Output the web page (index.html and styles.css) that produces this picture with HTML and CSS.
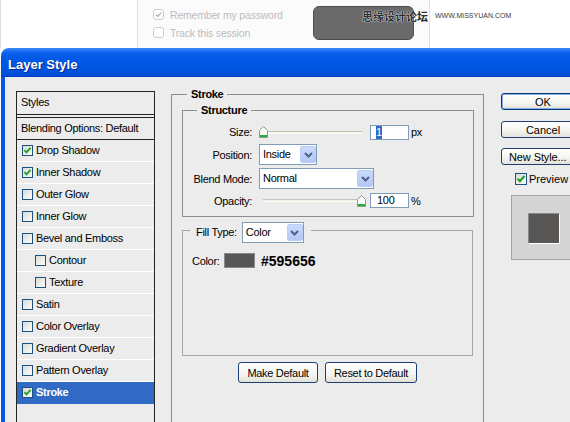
FILE: index.html
```html
<!DOCTYPE html>
<html lang="en">
<head>
<meta charset="utf-8">
<title>Layer Style</title>
<link rel="stylesheet" href="styles.css">
</head>
<body>
<div class="top">
  <div class="col col-a"></div>
  <div class="col col-b">
    <div class="login-opts">
      <div class="opt"><span class="rbox"><svg width="9" height="9" viewBox="0 0 9 9"><path d="M1.8 4.6 L3.6 6.4 L7.2 2.6" fill="none" stroke="#a9a9a9" stroke-width="1.3"/></svg></span>Remember my password</div>
      <div class="opt"><span class="rbox"></span>Track this session</div>
    </div>
    <div class="darkbtn"></div>
  </div>
  <div class="col col-c"></div>
  <div class="watermark"><span class="wm-cn">思缘设计论坛</span><span class="wm-en">WWW.MISSYUAN.COM</span></div>
</div>

<div class="dialog">
  <div class="titlebar">Layer Style</div>
  <div class="dbody">
    <div class="list">
      <div class="lh">Styles</div>
      <div class="blend">Blending Options: Default</div>
      <div class="row"><span class="cb"><svg width="9" height="9" viewBox="0 0 9 9"><path d="M1.5 4.2 L3.5 6.4 L7.6 1.8" fill="none" stroke="#21a121" stroke-width="1.9"/></svg></span>Drop Shadow</div>
      <div class="row"><span class="cb"><svg width="9" height="9" viewBox="0 0 9 9"><path d="M1.5 4.2 L3.5 6.4 L7.6 1.8" fill="none" stroke="#21a121" stroke-width="1.9"/></svg></span>Inner Shadow</div>
      <div class="row"><span class="cb"></span>Outer Glow</div>
      <div class="row"><span class="cb"></span>Inner Glow</div>
      <div class="row"><span class="cb"></span>Bevel and Emboss</div>
      <div class="row sub"><span class="cb"></span>Contour</div>
      <div class="row sub"><span class="cb"></span>Texture</div>
      <div class="row"><span class="cb"></span>Satin</div>
      <div class="row"><span class="cb"></span>Color Overlay</div>
      <div class="row"><span class="cb"></span>Gradient Overlay</div>
      <div class="row"><span class="cb"></span>Pattern Overlay</div>
      <div class="row sel"><span class="cb"><svg width="9" height="9" viewBox="0 0 9 9"><path d="M1.5 4.2 L3.5 6.4 L7.6 1.8" fill="none" stroke="#21a121" stroke-width="1.9"/></svg></span>Stroke</div>
    </div>

    <div class="main">
      <fieldset class="grp stroke">
        <legend>Stroke</legend>
        <fieldset class="grp structure">
          <legend>Structure</legend>
          <div class="form">
            <div class="lbl">Size:</div>
            <div class="ctl">
              <div class="slider">
                <svg class="thumb" width="9" height="12" viewBox="0 0 9 12"><path d="M0.5 4.5 L4.5 0.5 L8.5 4.5 V11.5 H0.5 Z" fill="#fbfbf8" stroke="#8c9a8c"/><path d="M1 9.5 H8 M1 10.5 H8" stroke="#27a93f"/></svg>
                <div class="track"></div>
              </div>
              <div class="num"><span class="hl">1</span></div>
              <span class="unit">px</span>
            </div>

            <div class="lbl">Position:</div>
            <div class="ctl">
              <div class="sel-box w58"><span class="val">Inside</span><span class="arrow"><svg width="9" height="6" viewBox="0 0 9 6"><path d="M1 1 L4.5 4.5 L8 1" fill="none" stroke="#4d6185" stroke-width="2"/></svg></span></div>
            </div>

            <div class="lbl">Blend Mode:</div>
            <div class="ctl">
              <div class="sel-box w115"><span class="val">Normal</span><span class="arrow"><svg width="9" height="6" viewBox="0 0 9 6"><path d="M1 1 L4.5 4.5 L8 1" fill="none" stroke="#4d6185" stroke-width="2"/></svg></span></div>
            </div>

            <div class="lbl">Opacity:</div>
            <div class="ctl">
              <div class="slider">
                <div class="track left"></div>
                <svg class="thumb" width="9" height="12" viewBox="0 0 9 12"><path d="M0.5 4.5 L4.5 0.5 L8.5 4.5 V11.5 H0.5 Z" fill="#fbfbf8" stroke="#8c9a8c"/><path d="M1 9.5 H8 M1 10.5 H8" stroke="#27a93f"/></svg>
              </div>
              <div class="num pad6">100</div>
              <span class="unit">%</span>
            </div>
          </div>
        </fieldset>

        <fieldset class="grp fill">
          <legend>
            <span class="fill-lbl">Fill Type:</span>
            <span class="sel-box w62"><span class="val">Color</span><span class="arrow"><svg width="9" height="6" viewBox="0 0 9 6"><path d="M1 1 L4.5 4.5 L8 1" fill="none" stroke="#4d6185" stroke-width="2"/></svg></span></span>
          </legend>
          <div class="fill-body">
            <div class="color-row">
              <span class="clbl">Color:</span>
              <span class="swatch"></span>
              <span class="hex">#595656</span>
            </div>
          </div>
        </fieldset>

        <div class="btnrow">
          <div class="xbtn w80">Make Default</div>
          <div class="xbtn w92">Reset to Default</div>
        </div>
      </fieldset>
    </div>

    <div class="side">
      <div class="xbtn sbtn default">OK</div>
      <div class="xbtn sbtn m11">Cancel</div>
      <div class="xbtn sbtn m10 lefttext">New Style...</div>
      <div class="prev"><span class="cb big"><svg width="10" height="10" viewBox="0 0 9 9"><path d="M1.5 4.2 L3.5 6.4 L7.6 1.8" fill="none" stroke="#21a121" stroke-width="1.9"/></svg></span>Preview</div>
      <div class="pbox"><div class="psq"></div></div>
    </div>
  </div>
</div>
</body>
</html>
```

FILE: styles.css
```css
* { box-sizing: border-box; }
html, body { margin: 0; padding: 0; }
body {
  width: 570px;
  height: 422px;
  overflow: hidden;
  background: #fff;
  font-family: "Liberation Sans", Arial, Helvetica, sans-serif;
  font-size: 11px;
  color: #000;
}

/* ---------- top web page strip ---------- */
.top { position: relative; display: flex; height: 48px; }
.col-a { width: 138px; border-left: 1px solid #dedede; border-right: 1px solid #dedede; }
.col-b {
  width: 292px;
  border-right: 1px solid #dedede;
  background: #fbfbfb;
  display: flex;
  justify-content: space-between;
  align-items: flex-start;
  padding: 6px 15px 0 15px;
}
.col-c { flex: 1; }
.login-opts { display: flex; flex-direction: column; gap: 7px; padding-top: 3px; }
.opt {
  display: flex; align-items: center; gap: 6px;
  height: 11px; color: #bcbcbc; font-size: 10.5px; letter-spacing: -0.2px; white-space: nowrap;
}
.rbox {
  width: 11px; height: 11px; border: 1px solid #cdcdcd; border-radius: 3px; background: #fff;
  display: flex; align-items: center; justify-content: center;
}
.darkbtn { width: 101px; height: 34px; background: #6a6a6a; border: 1px solid #4e4e4e; border-radius: 6px; }
.watermark { position: absolute; left: 362px; top: 9px; display: flex; align-items: center; gap: 7px; }
.wm-cn {
  font-family: "Noto Sans CJK SC", sans-serif; font-size: 11px; line-height: 14px;
  color: #2c2c2c; font-weight: bold; text-shadow: 0 0 1px #fff, 0 0 1px #fff;
}
.wm-en { font-size: 7px; color: #3a3a3a; line-height: 8px; }

/* ---------- dialog ---------- */
.dialog { margin-left: 1px; width: 620px; }
.titlebar {
  height: 29px;
  border-radius: 8px 8px 0 0;
  background: linear-gradient(to bottom, #3b8cf7 0px, #2677f3 2px, #0a5eea 5px, #0058e6 12px, #0055e2 20px, #0050da 26px, #0040c4 29px);
  color: #fff; font-weight: bold; font-size: 13px; line-height: 24px;
  padding: 5px 0 0 7px;
  text-shadow: 1px 1px 0 #0b2a8c;
}
.dbody {
  display: flex; align-items: flex-start;
  height: 345px;
  padding: 10px 0 0 11px;
  background: #ececec;
  border-left: 4px solid #0c55e3;
}
.dbody > * { flex-shrink: 0; }

/* styles list */
.list { width: 139px; height: 340px; margin-top: 4px; border: 1px solid #242424; letter-spacing: -0.3px; }
.lh { height: 23px; line-height: 21px; padding-left: 4px; border-bottom: 1px solid #242424; }
.blend {
  height: 23px; margin-top: 2px; line-height: 20px; padding-left: 4px;
  border-top: 1px solid #242424; border-bottom: 1px solid #242424;
}
.row { height: 22px; display: flex; align-items: center; gap: 3px; padding-left: 5px; padding-bottom: 1px; border-bottom: 1px solid #fff; }
.row.sub { padding-left: 18px; }
.row.sel { background: #316ac5; color: #fff; font-weight: bold; border-bottom-color: #316ac5; }
.cb {
  width: 11px; height: 11px; flex-shrink: 0;
  border: 1px solid #1c5180;
  background: linear-gradient(135deg, #dcdcd6, #fbfbf9);
  display: flex; align-items: center; justify-content: center;
}
.cb.big { width: 12px; height: 12px; }

/* main panel */
.main { margin-left: 16px; width: 313px; }
.grp { margin: 0; padding: 0; border: 1px solid #8e8e8e; min-width: 0; }
.grp > legend { padding: 0 4px; font-weight: bold; line-height: 14px; letter-spacing: -0.3px; }
.stroke { width: 313px; height: 345px; }
.stroke > legend { margin-left: 15px; }
.structure { width: 292px; margin: 2px 0 0 10px; padding: 6px 0 7px 0; }
.structure > legend { margin-left: 14px; }

.form {
  display: grid;
  grid-template-columns: 69px auto;
  grid-template-rows: 18px 21px 21px 17px;
  column-gap: 7px; row-gap: 3px;
  align-items: center;
  letter-spacing: -0.3px;
}
.lbl { text-align: right; }
.ctl { display: flex; align-items: center; }

.slider { width: 107px; height: 12px; display: flex; align-items: center; }
.thumb { display: block; flex-shrink: 0; }
.track {
  width: 94px; height: 3px;
  border-top: 1px solid #c6c4b8;
  border-bottom: 1px solid #fffef8;
  background: #f3f1e6;
}
.track.left { margin-left: 4px; }

.num {
  width: 39px; height: 15px; margin-left: 4px;
  border: 1px solid #7f9db9; background: #fff;
  padding-left: 5px; line-height: 13px;
  display: flex; align-items: center;
}
.num.pad6 { padding-left: 6px; }
.hl { background: #316ac5; color: #fff; line-height: 13px; }
.unit { margin-left: 2px; }

.sel-box {
  height: 21px; border: 1px solid #7f9db9; background: #fff;
  display: flex; align-items: stretch; padding: 1px 0 1px 1px;
  font-weight: normal;
}
.sel-box .val { flex: 1; padding-left: 2px; line-height: 17px; }
.w58 { width: 58px; }
.w115 { width: 115px; }
.w62 { width: 62px; }
.arrow {
  width: 16px; border-radius: 2px;
  border: 1px solid #bccdf5;
  background: linear-gradient(to bottom, #cad9fd, #b4c8f6);
  display: flex; align-items: center; justify-content: center;
}

/* fill type */
.fill { width: 291px; margin: 5px 0 0 10px; border-color: #a6a59b; }
.fill > legend {
  margin-left: 7px; padding: 0 7px 0 6px; height: 16px;
  display: flex; align-items: flex-start; gap: 5px;
  font-weight: normal;
}
.fill-lbl { line-height: 20px; }
.fill-body { height: 117px; padding: 15px 0 0 9px; }
.color-row { display: flex; align-items: center; height: 15px; letter-spacing: -0.3px; }
.clbl { width: 32px; }
.swatch { width: 31px; height: 15px; background: #595656; border: 1px solid #8a8a8a; }
.hex { margin-left: 6px; font-weight: bold; font-size: 14px; letter-spacing: 0; }

.btnrow { display: flex; justify-content: center; gap: 7px; margin-top: 6px; }
.xbtn {
  height: 21px;
  border: 1px solid #1f3f72; border-radius: 3px;
  background: linear-gradient(to bottom, #ffffff, #f4f4f0 60%, #e2e0d8);
  display: flex; align-items: center; justify-content: center;
  letter-spacing: -0.3px; white-space: nowrap;
}
.w80 { width: 80px; }
.w92 { width: 92px; }

/* side column */
.side { margin-left: 17px; width: 84px; padding-top: 6px; display: flex; flex-direction: column; }
.sbtn { height: 17px; width: 84px; letter-spacing: 0; overflow: hidden; }
.sbtn.lefttext { justify-content: flex-start; padding-left: 7px; letter-spacing: -0.1px; }
.sbtn.default { border-color: #003c74; box-shadow: inset 0 0 0 1px #8aabec; }
.m11 { margin-top: 11px; }
.m10 { margin-top: 10px; }
.prev { display: flex; align-items: center; gap: 2px; margin: 8px 0 0 14px; height: 12px; }
.pbox {
  margin: 10px 0 0 10px; width: 74px; height: 65px;
  background: #d5d5d5; border: 1px solid #a3a3a3; border-right: none;
  padding: 17px 0 0 16px;
}
.psq {
  width: 32px; height: 31px; background: #595656;
  border: 1px solid; border-color: #888 #fff #fff #888;
}
```
